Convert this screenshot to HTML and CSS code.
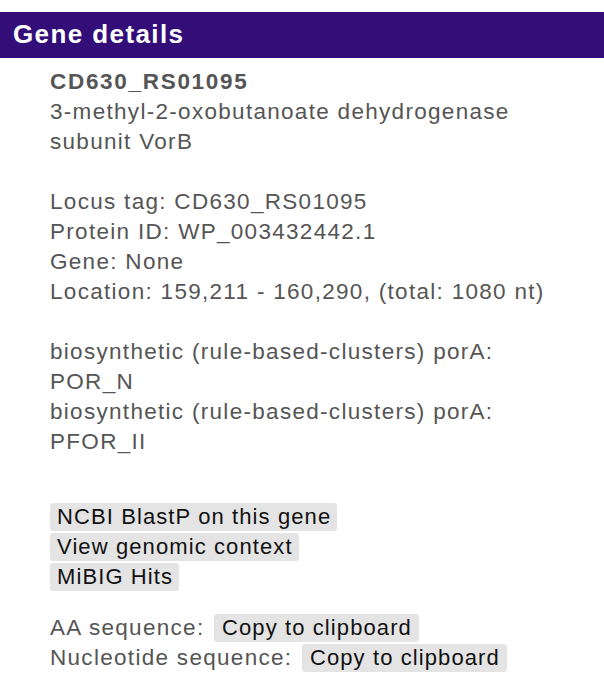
FILE: index.html
```html
<!DOCTYPE html>
<html>
<head>
<meta charset="utf-8">
<link rel="stylesheet" href="styles.css">
</head>
<body>
<div class="panel">
  <h3 class="panel-title">Gene details</h3>
  <div class="details">
    <div class="gene-name">CD630_RS01095</div>
    <div>3-methyl-2-oxobutanoate dehydrogenase</div>
    <div>subunit VorB</div>
    <div class="spacer"></div>
    <div>Locus tag: CD630_RS01095</div>
    <div>Protein ID: WP_003432442.1</div>
    <div>Gene: None</div>
    <div>Location: 159,211 - 160,290, (total: 1080 nt)</div>
    <div class="spacer"></div>
    <div>biosynthetic (rule-based-clusters) porA:</div>
    <div>POR_N</div>
    <div>biosynthetic (rule-based-clusters) porA:</div>
    <div>PFOR_II</div>
    <div class="links">
      <span class="btn">NCBI BlastP on this gene</span>
      <span class="btn">View genomic context</span>
      <span class="btn">MiBIG Hits</span>
    </div>
    <div class="sequences">
      <div class="seq-row">AA sequence: <span class="btn btn-copy">Copy to clipboard</span></div>
      <div class="seq-row">Nucleotide sequence: <span class="btn btn-copy">Copy to clipboard</span></div>
    </div>
  </div>
</div>
</body>
</html>
```

FILE: styles.css
```css
html, body {
  margin: 0;
  padding: 0;
  background: #ffffff;
}

body {
  font-family: "Liberation Sans", Arial, Helvetica, sans-serif;
}

.panel {
  padding-top: 12px;
}

.panel-title {
  margin: 0;
  height: 46px;
  line-height: 44px;
  padding-left: 13px;
  background: #330e79;
  color: #ffffff;
  font-size: 26px;
  letter-spacing: 1.4px;
  font-weight: bold;
}

.details {
  padding: 9px 0 0 50px;
  font-size: 22.5px;
  letter-spacing: 1.3px;
  line-height: 30px;
  color: #555555;
}

.gene-name {
  font-weight: bold;
  letter-spacing: 1.7px;
}

.spacer {
  height: 30px;
}

.links {
  display: flex;
  flex-direction: column;
  align-items: flex-start;
  gap: 2px;
  margin-top: 46px;
}

.btn {
  display: inline-block;
  height: 28px;
  line-height: 28px;
  padding: 0 6px 0 7px;
  background: #e4e4e4;
  color: #111111;
  font-size: 22px;
  letter-spacing: 1.1px;
  border-radius: 3px;
}

.btn-copy {
  margin-left: 2px;
  padding: 0 7px 0 8px;
}

.sequences {
  margin-top: 23px;
  display: flex;
  flex-direction: column;
  gap: 2px;
}

.seq-row {
  height: 28px;
  line-height: 28px;
}
```
